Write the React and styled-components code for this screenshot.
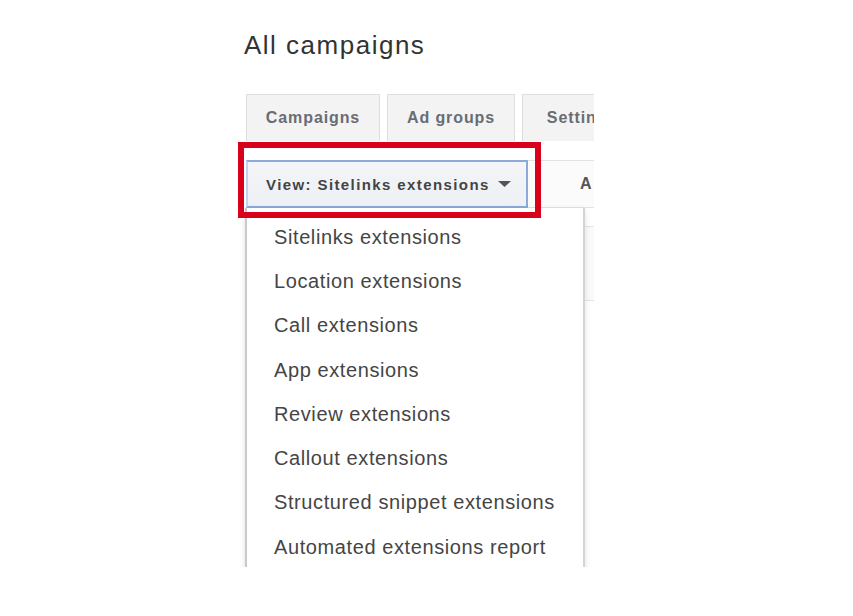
import React from "react";
import styled, { createGlobalStyle } from "styled-components";

const Global = createGlobalStyle`
  html, body { margin: 0; padding: 0; background: #ffffff; }
  body { font-family: "Liberation Sans", Arial, sans-serif; }
`;

const Frame = styled.div`
  position: relative;
  margin-left: 230px;
  width: 364px;
  height: 567px;
  padding-left: 14px;
  padding-top: 32px;
  box-sizing: border-box;
  overflow: hidden;
`;

const Title = styled.h1`
  margin: 0;
  font-size: 26px;
  line-height: 26px;
  font-weight: normal;
  letter-spacing: 1.5px;
  color: #333333;
`;

const TabRow = styled.div`
  display: flex;
  gap: 7px;
  margin-top: 36px;
  margin-left: 2px;
  width: 400px;
`;

const Tab = styled.div`
  flex: none;
  width: ${(p) => p.$w}px;
  height: 47px;
  box-sizing: border-box;
  display: flex;
  align-items: center;
  justify-content: center;
  background: #f3f3f3;
  border: 1px solid #dedede;
  border-bottom: none;
  font-size: 16px;
  font-weight: bold;
  letter-spacing: 0.9px;
  color: #686d73;
`;

const Toolbar = styled.div`
  display: flex;
  align-items: center;
  margin-top: 19px;
  margin-left: 2px;
  height: 48px;
  width: 400px;
  box-sizing: border-box;
  border-top: 1px solid #e2e2e2;
  border-bottom: 1px solid #e2e2e2;
  background: #fbfbfb;
`;

const ViewButton = styled.div`
  flex: none;
  width: 282px;
  height: 48px;
  box-sizing: border-box;
  display: flex;
  align-items: center;
  gap: 6px;
  padding-left: 18px;
  background: linear-gradient(#f3f5f8, #edf0f4);
  border: 2px solid #8caad9;
  border-left-color: #c5d3ea;
  font-size: 15px;
  font-weight: bold;
  letter-spacing: 1.4px;
  color: #444444;
`;

const Caret = styled.svg`
  flex: none;
  margin-left: 2px;
`;

const ToolLabel = styled.div`
  margin-left: 52px;
  font-size: 16px;
  font-weight: bold;
  color: #555555;
`;

const TableHead = styled.div`
  margin-top: 18px;
  margin-left: 2px;
  width: 400px;
  height: 75px;
  box-sizing: border-box;
  border: 1px solid #e4e4e4;
  background: #fafafa;
`;

const Menu = styled.ul`
  position: absolute;
  left: 15px;
  top: 208px;
  width: 340px;
  height: 400px;
  margin: 0;
  padding: 7px 0 0 0;
  list-style: none;
  box-sizing: border-box;
  background: #ffffff;
  border-left: 2px solid #c9c9c9;
  border-right: 2px solid #d4d4d4;
  box-shadow: 0 2px 6px rgba(0, 0, 0, 0.12);
`;

const MenuItem = styled.li`
  height: 44.3px;
  display: flex;
  align-items: center;
  padding-left: 27px;
  font-size: 20px;
  letter-spacing: 0.6px;
  color: #454545;
  white-space: nowrap;
`;

const Highlight = styled.div`
  position: absolute;
  left: 8px;
  top: 142px;
  width: 303px;
  height: 76px;
  box-sizing: border-box;
  border: 6px solid #d8001a;
  pointer-events: none;
`;

const items = [
  "Sitelinks extensions",
  "Location extensions",
  "Call extensions",
  "App extensions",
  "Review extensions",
  "Callout extensions",
  "Structured snippet extensions",
  "Automated extensions report",
];

export default function App() {
  return (
    <>
      <Global />
      <Frame>
        <Title>All campaigns</Title>
        <TabRow>
          <Tab $w={134}>Campaigns</Tab>
          <Tab $w={128}>Ad groups</Tab>
          <Tab $w={120}>Settings</Tab>
        </TabRow>
        <Toolbar>
          <ViewButton>
            View: Sitelinks extensions
            <Caret width="13" height="6" viewBox="0 0 13 6">
              <path d="M0 0 L13 0 L6.5 6 Z" fill="#555" />
            </Caret>
          </ViewButton>
          <ToolLabel>A</ToolLabel>
        </Toolbar>
        <TableHead />
        <Menu>
          {items.map((t) => (
            <MenuItem key={t}>{t}</MenuItem>
          ))}
        </Menu>
        <Highlight />
      </Frame>
    </>
  );
}
